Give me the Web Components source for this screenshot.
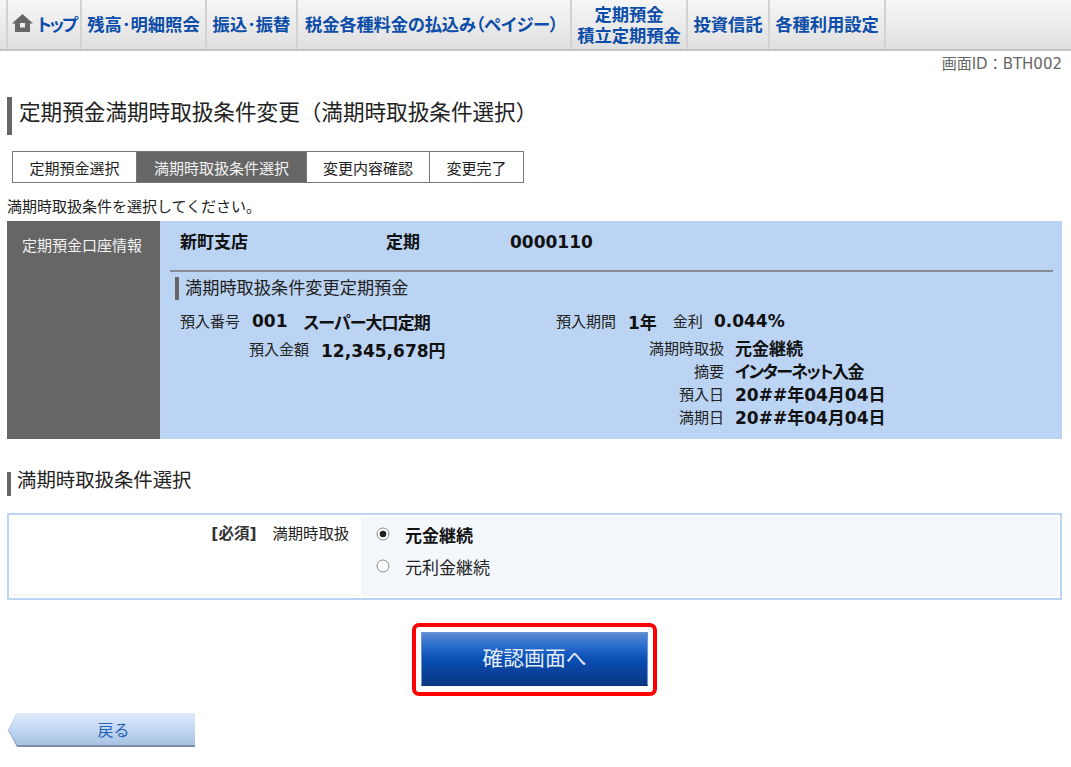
<!DOCTYPE html>
<html lang="ja">
<head>
<meta charset="utf-8">
<title>定期預金満期時取扱条件変更</title>
<style>
  html, body { margin: 0; background: #fff; }
  body {
    font-family: "DejaVu Sans", "Noto Sans CJK JP", sans-serif;
    font-size: 15px;
    color: #222;
  }
</style>
</head>
<body>
<bank-nav></bank-nav>
<screen-id>画面ID：BTH002</screen-id>
<page-title>定期預金満期時取扱条件変更（満期時取扱条件選択）</page-title>
<step-bar></step-bar>
<lead-text>満期時取扱条件を選択してください。</lead-text>
<account-panel></account-panel>
<section-title>満期時取扱条件選択</section-title>
<maturity-form></maturity-form>
<confirm-button>確認画面へ</confirm-button>
<back-button>戻る</back-button>

<script>
function shadow(el, html) {
  el.attachShadow({ mode: 'open' }).innerHTML = html;
}

class BankNav extends HTMLElement {
  constructor() {
    super();
    shadow(this, `
      <style>
        :host { display: block; }
        nav {
          display: grid;
          grid-template-columns: 8px 74px 125px 91px 274px 116px 82px 116px 1fr;
          height: 49px;
          background: linear-gradient(#f7f7f7, #dfdfdf);
          border-bottom: 2px solid #c4c4c4;
        }
        a {
          display: flex;
          align-items: center;
          justify-content: center;
          text-align: center;
          box-sizing: border-box;
          padding-top: 2px;
          border-right: 2px solid #d2d2d2;
          font-weight: bold;
          font-size: 17.300px;
          line-height: 21px;
          color: #0b4da8;
          white-space: nowrap;
        }
        .top { font-feature-settings: "palt"; letter-spacing: -2px; gap: 4px; justify-content: flex-start; padding-left: 4px; }
        .top svg { flex: none; margin-top: -5px; }
        .pay { font-feature-settings: "palt"; letter-spacing: -.15px; justify-content: flex-start; padding-left: 7px; }
        .end { border: 0; }
      </style>
      <nav>
        <a></a>
        <a class="top"><svg width="21" height="18" viewBox="0 0 21 18"><path fill="#666" d="M10.500 0 21 9.500H18V18H3V9.500H0Z"/><rect x="8" y="9" width="5" height="4.500" fill="#eee"/></svg><span>トップ</span></a>
        <a>残高･明細照会</a>
        <a>振込･振替</a>
        <a class="pay">税金各種料金の払込み（ペイジー）</a>
        <a>定期預金<br>積立定期預金</a>
        <a>投資信託</a>
        <a>各種利用設定</a>
        <a class="end"></a>
      </nav>`);
  }
}

class ScreenId extends HTMLElement {
  constructor() {
    super();
    shadow(this, `
      <style>
        :host { display: block; text-align: right; padding: 3px 9px 0 0; height: 33px; box-sizing: border-box; line-height: 21px; color: #666; }
      </style><slot></slot>`);
  }
}

class PageTitle extends HTMLElement {
  constructor() {
    super();
    shadow(this, `
      <style>
        :host { display: block; margin: 13px 0 0 7px; height: 38px; padding-left: 7px; border-left: 5px solid #666; box-sizing: border-box; font-size: 21.600px; line-height: 32px; color: #222; }
      </style><slot></slot>`);
  }
}

class SectionTitle extends HTMLElement {
  constructor() {
    super();
    shadow(this, `
      <style>
        :host { display: block; margin: 33px 0 0 7px; height: 24px; padding-left: 6px; border-left: 4px solid #666; box-sizing: border-box; font-size: 19.400px; line-height: 18px; color: #222; }
      </style><slot></slot>`);
  }
}

class StepBar extends HTMLElement {
  constructor() {
    super();
    shadow(this, `
      <style>
        :host { display: block; margin: 16px 0 0 12px; }
        ol {
          display: grid;
          grid-template-columns: 123px 170px 123px 94px;
          width: 512px;
          height: 32px;
          margin: 0; padding: 0;
          list-style: none;
          box-sizing: border-box;
          border: 1px solid #777;
        }
        li { display: flex; align-items: center; justify-content: center; border-left: 1px solid #777; }
        li:first-child { border-left: 0; }
        .on { background: #666; color: #f2f2f2; }
      </style>
      <ol>
        <li>定期預金選択</li>
        <li class="on">満期時取扱条件選択</li>
        <li>変更内容確認</li>
        <li>変更完了</li>
      </ol>`);
  }
}

class LeadText extends HTMLElement {
  constructor() {
    super();
    shadow(this, `
      <style>
        :host { display: block; margin: 14px 0 0 7px; height: 24px; line-height: 21px; }
      </style><slot></slot>`);
  }
}

class AccountPanel extends HTMLElement {
  constructor() {
    super();
    shadow(this, `
      <style>
        :host { display: block; margin: 0 9px 0 7px; }
        .panel { display: grid; grid-template-columns: 153px 1fr; height: 218px; background: #bcd4f3; }
        .side { background: #666; color: #f2f2f2; padding: 15px 0 0 15px; line-height: 21px; }
        .main { padding: 0 9px 0 10px; }
        b { font-size: 17px; font-weight: bold; color: #111; }
        .row b { padding-top: 2px; }
        .super { font-feature-settings: "palt"; letter-spacing: -.9px; margin-left: 4px; }
        .net { font-feature-settings: "palt"; letter-spacing: -1.600px; }
        .branch {
          display: grid;
          grid-template-columns: 206px 124px 1fr;
          height: 51px;
          padding: 10px 0 0 10px;
          box-sizing: border-box;
          line-height: 23px;
          border-bottom: 2px solid #868c96;
        }
        h3 {
          margin: 5px 0 0 5px;
          height: 23px;
          padding-left: 6px;
          border-left: 4px solid #666;
          font-size: 17.200px;
          font-weight: normal;
          line-height: 23px;
          color: #222;
        }
        .fields { display: grid; grid-template-columns: 386px 1fr; margin-top: 6px; }
        .row { display: flex; align-items: center; height: 28px; gap: 12px; }
        .left { padding-left: 10px; }
        .left .row + .row { padding-left: 69px; }
        .rate { margin-left: 4px; }
        .pct { margin-left: -1px; }
        dl { display: grid; grid-template-columns: 168px 1fr; column-gap: 11px; margin: 2px 0 0; grid-auto-rows: 23px; align-items: center; }
        dt { text-align: right; }
        dd { margin: 0; }
      </style>
      <div class="panel">
        <div class="side">定期預金口座情報</div>
        <div class="main">
          <div class="branch"><b>新町支店</b><b>定期</b><b>0000110</b></div>
          <h3>満期時取扱条件変更定期預金</h3>
          <div class="fields">
            <div class="left">
              <div class="row"><span>預入番号</span><b>001</b><b class="super">スーパー大口定期</b></div>
              <div class="row"><span>預入金額</span><b>12,345,678円</b></div>
            </div>
            <div>
              <div class="row"><span>預入期間</span><b>1年</b><span class="rate">金利</span><b class="pct">0.044%</b></div>
              <dl>
                <dt>満期時取扱</dt><dd><b>元金継続</b></dd>
                <dt>摘要</dt><dd><b class="net">インターネット入金</b></dd>
                <dt>預入日</dt><dd><b>20##年04月04日</b></dd>
                <dt>満期日</dt><dd><b>20##年04月04日</b></dd>
              </dl>
            </div>
          </div>
        </div>
      </div>`);
  }
}

class RadioOption extends HTMLElement {
  constructor() {
    super();
    const on = this.hasAttribute('checked');
    shadow(this, `
      <style>
        :host { display: flex; align-items: center; gap: 15px; height: 32px; font-size: 17px; color: #222; }
        svg { flex: none; }
        .on { font-weight: bold; color: #111; }
      </style>
      <svg width="14" height="14" viewBox="0 0 14 14">
        <circle cx="7" cy="7" r="6" fill="#fff" stroke="#8a8a8a"/>
        ${on ? '<circle cx="7" cy="7" r="3.300" fill="#222"/>' : ''}
      </svg>
      <span class="${on ? 'on' : ''}"><slot></slot></span>`);
  }
}

class MaturityForm extends HTMLElement {
  constructor() {
    super();
    shadow(this, `
      <style>
        :host { display: block; margin: 17px 9px 0 7px; }
        .box {
          display: grid;
          grid-template-columns: 348px 1fr;
          column-gap: 2px;
          height: 87px;
          box-sizing: border-box;
          padding: 2px 2px 2px;
          border: 2px solid #bcd4f3;
          background: #fff;
        }
        .label { display: flex; justify-content: flex-end; gap: 16px; padding: 7px 10px 0 0; line-height: 21px; border-bottom: 2px solid #f6f6f6; }
        .label b { color: #333; font-size: 15.500px; }
        .label span { font-size: 15.300px; }
        .value { background: #f4f8fd; padding: 1px 0 0 15px; border-bottom: 2px solid #f4f4f4; }
      </style>
      <div class="box">
        <div class="label"><b>[必須]</b><span>満期時取扱</span></div>
        <div class="value">
          <radio-option checked>元金継続</radio-option>
          <radio-option>元利金継続</radio-option>
        </div>
      </div>`);
  }
}

class ConfirmButton extends HTMLElement {
  constructor() {
    super();
    shadow(this, `
      <style>
        :host { display: block; width: 245px; height: 73px; margin: 23px auto 0; position: relative; left: -1px; }
        .ring { height: 100%; box-sizing: border-box; padding: 5px 5px 6px; border: 4px solid #f00; border-radius: 7px; }
        .btn {
          display: flex; align-items: center; justify-content: center;
          height: 100%;
          box-sizing: border-box;
          padding-bottom: 4px;
          border: 1px solid #6f97d6;
          border-bottom-color: #0a3078;
          background: linear-gradient(#5a8bd6 0%, #2a6ccc 25%, #0a4fb4 50%, #0a3f96 80%, #0a3a86 100%);
          color: #e6eefb;
          font-size: 20.800px;
        }
      </style>
      <div class="ring"><div class="btn"><slot></slot></div></div>`);
  }
}

class BackButton extends HTMLElement {
  constructor() {
    super();
    shadow(this, `
      <style>
        :host { display: block; width: 187px; height: 34px; margin: 17px 0 0 8px; }
        .edge {
          height: 100%;
          background: #7d8fae;
          clip-path: polygon(9px 0, 100% 0, 100% 100%, 9px 100%, 0 50%);
        }
        .btn {
          display: flex; align-items: center; justify-content: center;
          height: 32px;
          padding: 0 0 1px 24px;
          box-sizing: border-box;
          background: linear-gradient(#e0ebfb, #bdd4f1 60%, #a8c2e2);
          clip-path: polygon(9px 0, 100% 0, 100% 100%, 9px 100%, 0 50%);
          color: #2a62b8;
          font-size: 16px;
        }
      </style>
      <div class="edge"><div class="btn"><slot></slot></div></div>`);
  }
}

customElements.define('radio-option', RadioOption);
customElements.define('bank-nav', BankNav);
customElements.define('screen-id', ScreenId);
customElements.define('page-title', PageTitle);
customElements.define('section-title', SectionTitle);
customElements.define('step-bar', StepBar);
customElements.define('lead-text', LeadText);
customElements.define('account-panel', AccountPanel);
customElements.define('maturity-form', MaturityForm);
customElements.define('confirm-button', ConfirmButton);
customElements.define('back-button', BackButton);
</script>
</body>
</html>
